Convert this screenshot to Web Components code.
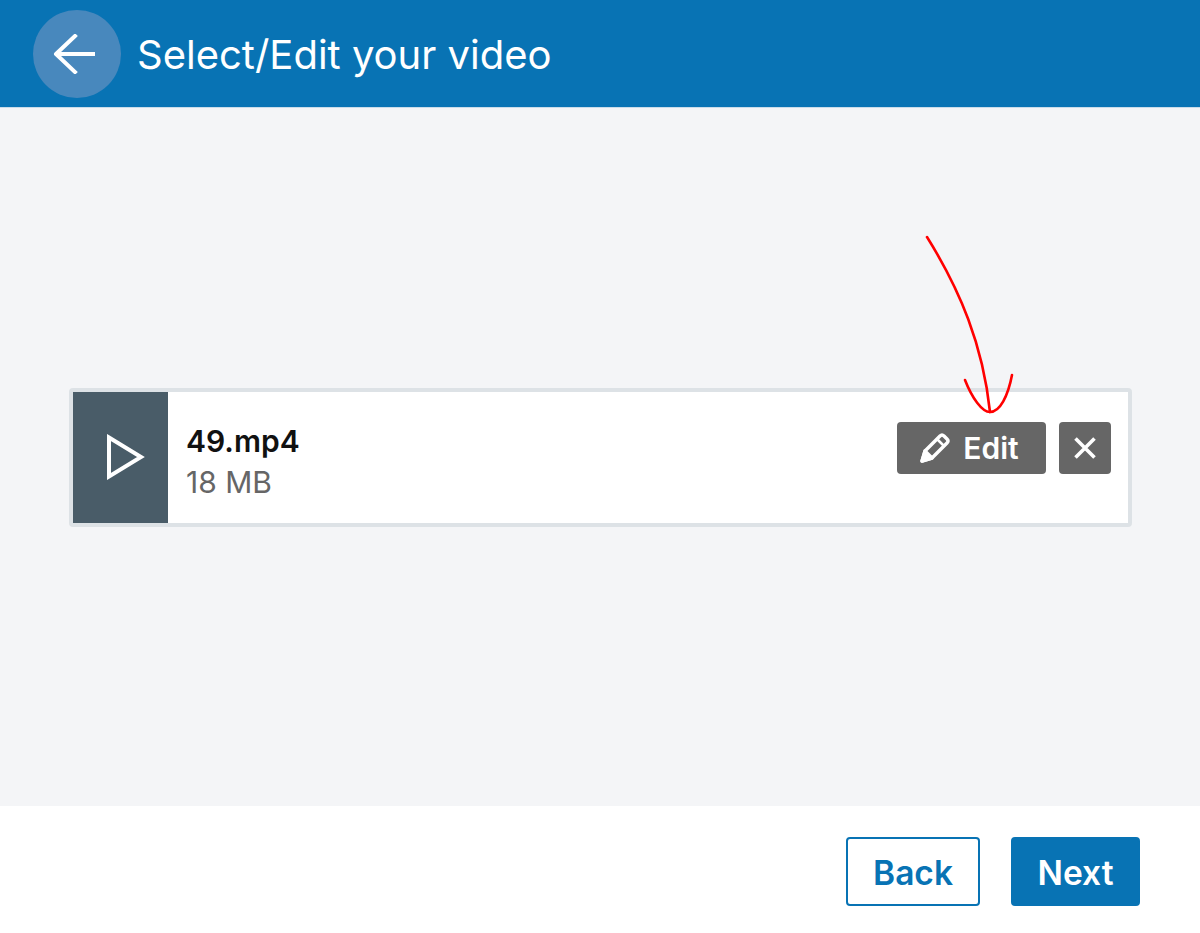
<!DOCTYPE html>
<html lang="en">
<head>
    <meta charset="UTF-8">
    <title>Select/Edit your video</title>
    <style>
        html, body { margin: 0; height: 100%; }
        body { font-family: Inter, "Liberation Sans", sans-serif; }
        video-page { height: 933px; }
    </style>
</head>
<body>
    <template id="page-header">
        <style>
            :host { display: flex; align-items: center; height: 107px; background: #0873b4; border-bottom: 1px solid #c9dcea; padding-left: 33px; gap: 16px; color: #fff; box-sizing: content-box; }
            .back { width: 88px; height: 88px; border-radius: 50%; background: #4888bd; display: flex; align-items: center; justify-content: center; }
            .back svg { margin-right: 5px; }
            h1 { margin: 0; padding-top: 2px; font-size: 40px; font-weight: 400; white-space: nowrap; }
        </style>
        <div class="back">
            <svg width="44" height="40" viewBox="0 0 44 40" fill="none" stroke="#fff" stroke-width="4" stroke-linejoin="round" stroke-linecap="round">
                <path d="M22 2 L3 20 L22 38" stroke-linecap="square"/>
                <path d="M3 20 H42" stroke-linecap="butt"/>
            </svg>
        </div>
        <h1><slot></slot></h1>
    </template>

    <template id="file-row">
        <style>
            :host { display: flex; align-items: stretch; height: 131px; border: 4px solid #dde2e6; border-radius: 4px; background: #fff; box-sizing: content-box; }
            .thumb { width: 95px; flex: none; background: #495c68; display: flex; align-items: center; justify-content: center; }
            .thumb svg { margin-left: 10px; }
            .info { flex: 1; padding: 8px 0 0 18px; display: flex; flex-direction: column; justify-content: center; gap: 5px; }
            .name { font-size: 30px; font-weight: 600; color: #111; line-height: 36px; }
            .size { font-size: 30px; color: #666; line-height: 36px; }
            .actions { display: flex; align-items: center; gap: 13px; padding: 0 17px 19px 0; }
        </style>
        <div class="thumb">
            <svg width="38" height="46" viewBox="0 0 38 46" fill="none" stroke="#fff" stroke-width="4">
                <path d="M2 3.5 L34 23 L2 42.5 Z"/>
            </svg>
        </div>
        <div class="info">
            <div class="name"><slot name="name"></slot></div>
            <div class="size"><slot name="size"></slot></div>
        </div>
        <div class="actions"><slot name="actions"></slot></div>
    </template>

    <template id="grey-button">
        <style>
            :host { display: inline-flex; align-items: center; justify-content: center; height: 52px; min-width: 52px; gap: 12px; background: #666; color: #fff; border-radius: 4px; font-size: 30px; font-weight: 600; box-sizing: border-box; }
            :host([wide]) { padding-right: 5px; }
        </style>
        <slot></slot>
    </template>

    <template id="wizard-button">
        <style>
            :host { display: inline-flex; align-items: center; justify-content: center; height: 69px; padding-top: 2px; border-radius: 4px; font-size: 33.5px; font-weight: 600; box-sizing: border-box; color: #0873b4; border: 2px solid #0873b4; background: #fff; }
            :host([primary]) { background: #0873b4; color: #fff; }
        </style>
        <slot></slot>
    </template>

    <template id="video-page">
        <style>
            :host { display: flex; flex-direction: column; position: relative; }
            main { flex: 1; background: #f4f5f7; display: flex; align-items: center; padding: 0 68px 0 69px; }
            ::slotted(file-row) { flex: 1; }
            footer { height: 127px; flex: none; background: #fff; display: flex; align-items: center; justify-content: flex-end; gap: 31px; padding: 4px 60px 0 0; box-sizing: border-box; }
            .arrow { position: absolute; left: 920px; top: 230px; pointer-events: none; }
        </style>
        <slot name="header"></slot>
        <main><slot name="body"></slot></main>
        <footer><slot name="footer"></slot></footer>
        <svg class="arrow" width="100" height="190" viewBox="920 230 100 190" fill="none" stroke="#f00" stroke-width="2.6" stroke-linecap="round">
            <path d="M927 237 C960 290 983 345 990 412"/>
            <path d="M965 380 C972 398 982 412 990 412 C1000 412 1008 396 1012 375"/>
        </svg>
    </template>

    <video-page>
        <page-header slot="header">Select/Edit your video</page-header>
        <file-row slot="body">
            <span slot="name">49.mp4</span>
            <span slot="size">18 MB</span>
            <grey-button slot="actions" wide style="width:149px">
                <svg width="32" height="32" viewBox="0 0 32 32" fill="none" stroke="#fff" stroke-width="3.4" stroke-linejoin="round">
                    <path d="M3 29 L6 19 L21 4 Q23 2 25 4 L28 7 Q30 9 28 11 L13 26 Z"/>
                    <path d="M18 7 L25 14" stroke-width="2.5"/>
                    <path d="M3 29 L6 19 L13 26 Z" fill="#fff"/>
                </svg>
                <span>Edit</span>
            </grey-button>
            <grey-button slot="actions">
                <svg width="24" height="24" viewBox="0 0 24 24" fill="none" stroke="#fff" stroke-width="3.6">
                    <path d="M2.5 2.5 L21.5 21.5 M21.5 2.5 L2.5 21.5"/>
                </svg>
            </grey-button>
        </file-row>
        <wizard-button slot="footer" style="width:134px">Back</wizard-button>
        <wizard-button slot="footer" primary style="width:129px">Next</wizard-button>
    </video-page>

    <script>
        // each element just clones its template of the same name
        for (const name of ["page-header", "file-row", "grey-button", "wizard-button", "video-page"]) {
            customElements.define(name, class extends HTMLElement {
                constructor() {
                    super();
                    const template = document.getElementById(name);
                    this.attachShadow({ mode: "open" }).appendChild(template.content.cloneNode(true));
                }
            });
        }
    </script>
</body>
</html>
